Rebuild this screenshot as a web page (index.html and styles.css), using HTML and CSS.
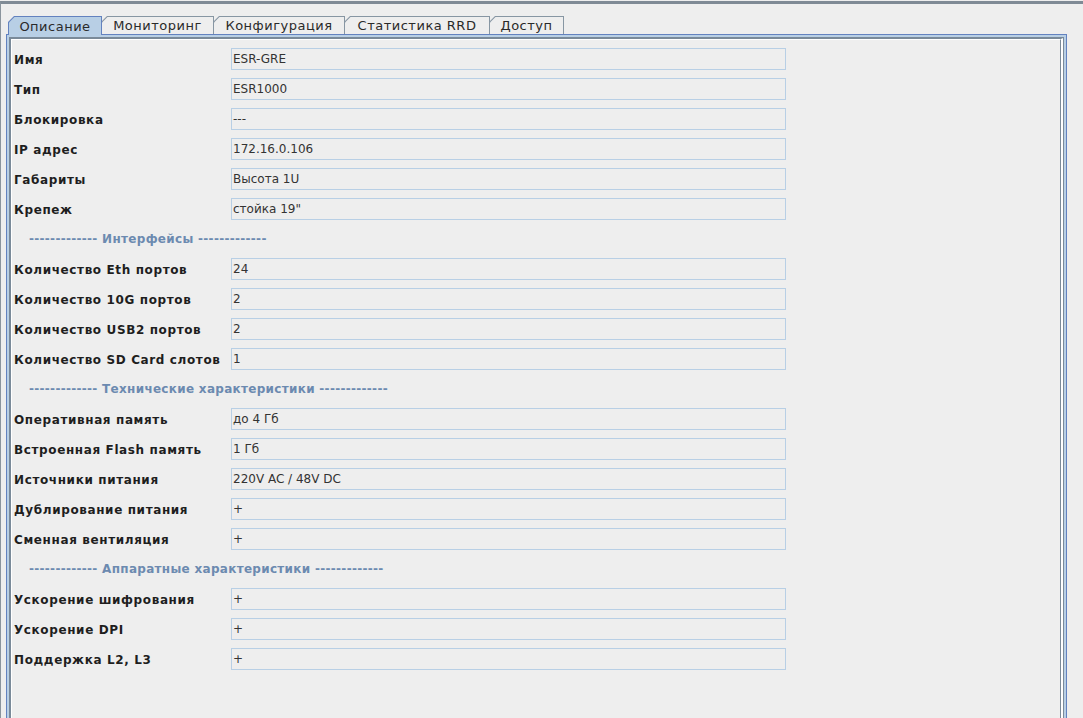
FILE: index.html
```html
<!DOCTYPE html>
<html>
<head>
<meta charset="utf-8">
<link rel="stylesheet" href="styles.css">
</head>
<body>
<div class="window">
  <div class="tabs">
    <div class="tab sel w1"><span>Описание</span></div>
    <div class="tab w2"><span>Мониторинг</span></div>
    <div class="tab w3"><span>Конфигурация</span></div>
    <div class="tab w4"><span>Статистика RRD</span></div>
    <div class="tab w5"><span>Доступ</span></div>
  </div>
  <div class="pane">
    <div class="band">
      <div class="f1">
        <div class="f2">
          <div class="f3">
            <div class="form">
              <div class="lbl">Имя</div><div class="fld">ESR-GRE</div>
              <div class="lbl">Тип</div><div class="fld">ESR1000</div>
              <div class="lbl">Блокировка</div><div class="fld">---</div>
              <div class="lbl">IP адрес</div><div class="fld">172.16.0.106</div>
              <div class="lbl">Габариты</div><div class="fld">Высота 1U</div>
              <div class="lbl">Крепеж</div><div class="fld">стойка 19"</div>
              <div class="sect">------------- Интерфейсы -------------</div>
              <div class="lbl">Количество Eth портов</div><div class="fld">24</div>
              <div class="lbl">Количество 10G портов</div><div class="fld">2</div>
              <div class="lbl">Количество USB2 портов</div><div class="fld">2</div>
              <div class="lbl">Количество SD Card слотов</div><div class="fld">1</div>
              <div class="sect">------------- Технические характеристики -------------</div>
              <div class="lbl">Оперативная память</div><div class="fld">до 4 Гб</div>
              <div class="lbl">Встроенная Flash память</div><div class="fld">1 Гб</div>
              <div class="lbl">Источники питания</div><div class="fld">220V AC / 48V DC</div>
              <div class="lbl">Дублирование питания</div><div class="fld">+</div>
              <div class="lbl">Сменная вентиляция</div><div class="fld">+</div>
              <div class="sect">------------- Аппаратные характеристики -------------</div>
              <div class="lbl">Ускорение шифрования</div><div class="fld">+</div>
              <div class="lbl">Ускорение DPI</div><div class="fld">+</div>
              <div class="lbl">Поддержка L2, L3</div><div class="fld">+</div>
            </div>
          </div>
        </div>
      </div>
    </div>
  </div>
</div>
</body>
</html>
```

FILE: styles.css
```css
html, body {
  margin: 0;
  padding: 0;
  background: #eeeeee;
  overflow: hidden;
}
body {
  font-family: "DejaVu Sans", "Liberation Sans", sans-serif;
  font-size: 12px;
  color: #222222;
}
.window {
  margin-top: 1px;
  height: 717px;
  box-sizing: border-box;
  border-top: 3px solid #7f8a95;
  border-left: 1px solid #8a949d;
  display: flex;
  flex-direction: column;
}
.tabs {
  display: flex;
  margin-top: 12px;
  padding-left: 7px;
  height: 18px;
  position: relative;
  z-index: 2;
}
.tab {
  position: relative;
  box-sizing: border-box;
  height: 18px;
  margin-right: -1px;
  background: #8796a3;
  clip-path: polygon(0 100%, 0 6px, 6px 0, 100% 0, 100% 100%);
  display: flex;
  align-items: center;
  justify-content: center;
  font-size: 13px;
  letter-spacing: 0.5px;
  color: #2a2a2a;
}
.tab::before {
  content: "";
  position: absolute;
  left: 1px;
  top: 1px;
  right: 1px;
  bottom: 0;
  background: #eeeeee;
  clip-path: polygon(0 100%, 0 5.5px, 5.5px 0, 100% 0, 100% 100%);
}
.tab span {
  position: relative;
  padding-top: 1px;
}
.tab.sel {
  background: #6382bf;
  height: 19px;
  margin-bottom: -1px;
  z-index: 3;
}
.tab.sel::before {
  background: #b8cfe5;
}
.w1 { width: 94px; }
.w2 { width: 113px; }
.w3 { width: 132px; }
.w4 { width: 146px; }
.w5 { width: 75px; }

.pane {
  flex: 1;
  margin-left: 5px;
  width: 1061px;
  box-sizing: border-box;
  border: 1px solid #6382bf;
  border-bottom: none;
  display: flex;
  position: relative;
  z-index: 1;
}
.band {
  flex: 1;
  border: 2px solid #b8cfe5;
  border-bottom: none;
  display: flex;
}
.f1 {
  flex: 1;
  border: 1px solid #7a8a99;
  border-bottom: none;
  display: flex;
}
.f2 {
  flex: 1;
  border-left: 1px solid #7a8a99;
  border-top: 1px solid #7a8a99;
  border-right: 2px solid #ffffff;
  display: flex;
}
.f3 {
  flex: 1;
  border-left: 1px solid #ffffff;
  border-top: 1px solid #ffffff;
  border-right: 1px solid #7a8a99;
  background: #eeeeee;
}
.form {
  display: grid;
  grid-template-columns: 217px 555px;
  grid-auto-rows: 30px;
  padding: 4px 0 0 2px;
  align-items: center;
}
.lbl {
  font-weight: bold;
  letter-spacing: 0.62px;
  color: #1e1e1e;
  white-space: nowrap;
  padding-top: 1px;
}
.fld {
  height: 22px;
  box-sizing: border-box;
  border: 1px solid #b8cfe5;
  padding-left: 1px;
  line-height: 20px;
  color: #333333;
  white-space: nowrap;
}
.sect {
  grid-column: 1 / 3;
  padding-left: 15px;
  font-weight: bold;
  letter-spacing: 0.3px;
  color: #6c8ab0;
  white-space: nowrap;
}
```
